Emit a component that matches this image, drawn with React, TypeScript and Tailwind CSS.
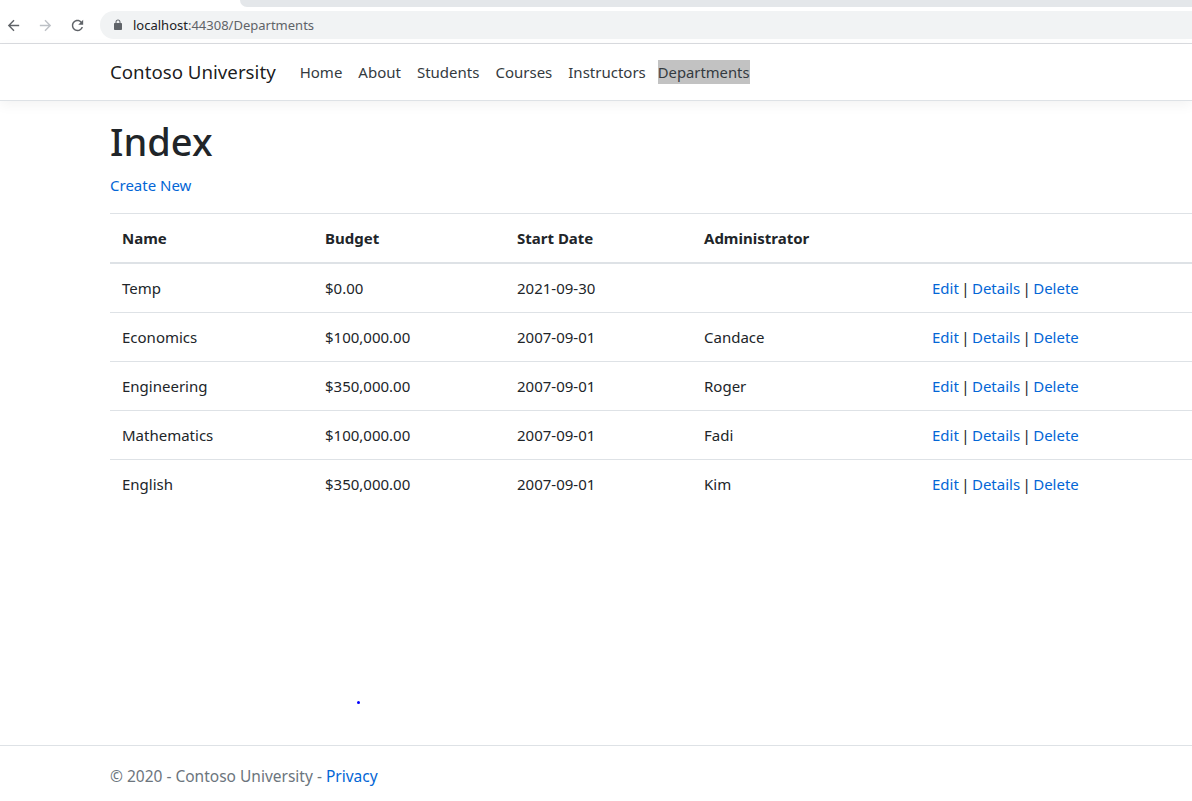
import React from "react";

const departments = [
  { name: "Temp", budget: "$0.00", start: "2021-09-30", admin: "" },
  { name: "Economics", budget: "$100,000.00", start: "2007-09-01", admin: "Candace" },
  { name: "Engineering", budget: "$350,000.00", start: "2007-09-01", admin: "Roger" },
  { name: "Mathematics", budget: "$100,000.00", start: "2007-09-01", admin: "Fadi" },
  { name: "English", budget: "$350,000.00", start: "2007-09-01", admin: "Kim" },
];

const navLinks = ["Home", "About", "Students", "Courses", "Instructors"];

function BrowserBar() {
  return (
    <div className="border-b border-[#dadce0] bg-white">
      <div className="flex h-[7px]">
        <div className="ml-[240px] flex-1 rounded-bl-[7px] bg-[#e4e7ea]" />
      </div>
      <div className="flex h-[36px] items-start pt-[4px]">
        <div className="flex h-[28px] w-[100px] items-center">
          <svg className="ml-[5px] h-[17px] w-[17px]" viewBox="0 0 24 24" fill="#5f6368">
            <path d="M20 11H7.83l5.59-5.59L12 4l-8 8 8 8 1.41-1.41L7.83 13H20v-2z" />
          </svg>
          <svg className="ml-[15px] h-[17px] w-[17px]" viewBox="0 0 24 24" fill="#bdc1c6">
            <path d="M12 4l-1.41 1.41L16.17 11H4v2h12.17l-5.58 5.59L12 20l8-8z" />
          </svg>
          <svg className="ml-[15px] h-[17px] w-[17px]" viewBox="0 0 24 24" fill="#5f6368">
            <path d="M17.65 6.35C16.2 4.9 14.21 4 12 4c-4.42 0-7.99 3.58-7.99 8s3.57 8 7.99 8c3.73 0 6.84-2.55 7.73-6h-2.08c-.82 2.33-3.04 4-5.65 4-3.31 0-6-2.69-6-6s2.69-6 6-6c1.66 0 3.14.69 4.22 1.78L13 11h7V4l-2.35 2.35z" />
          </svg>
        </div>
        <div className="flex h-[28px] flex-1 items-center rounded-l-full bg-[#f1f3f4] pl-[12px]">
          <svg className="h-[12px] w-[12px]" viewBox="0 0 24 24" fill="#5f6368">
            <path d="M18 8h-1V6c0-2.76-2.24-5-5-5S7 3.24 7 6v2H6c-1.1 0-2 .9-2 2v10c0 1.1.9 2 2 2h12c1.1 0 2-.9 2-2V10c0-1.1-.9-2-2-2zM9 6c0-1.66 1.34-3 3-3s3 1.34 3 3v2H9V6z" />
          </svg>
          <span className="ml-[9px] text-[13px] font-['Noto_Sans',sans-serif] text-[#202124]">
            localhost<span className="text-[#5f6368]">:44308/Departments</span>
          </span>
        </div>
      </div>
    </div>
  );
}

export default function App() {
  return (
    <div className="relative flex min-h-[801px] flex-col bg-white font-['Noto_Sans',sans-serif] text-[16px] leading-6 text-[#212529]">
      <BrowserBar />

      <header className="h-[57px] border-b border-[#dee2e6] bg-white shadow-[0_4px_12px_rgba(0,0,0,0.05)]">
        <div className="flex h-[56px] items-center pl-[110px]">
          <span className="mr-[16px] text-[18.7px] text-black/90">Contoso University</span>
          <nav className="flex items-center">
            {navLinks.map((l) => (
              <a key={l} className="px-[8px] text-[15px] text-[#343a40]">
                {l}
              </a>
            ))}
            <a className="ml-[4px] bg-[#c2c2c2] text-[14.8px] text-[#343a40]">Departments</a>
          </nav>
        </div>
      </header>

      <main className="flex-1 pl-[110px] pt-[16px]">
        <h1 className="mb-[8px] text-[38px] leading-[48px] font-medium">Index</h1>
        <p className="mb-[16px]">
          <a className="text-[15px] text-[#0366d6]">Create New</a>
        </p>
        <table className="w-[1110px] border-collapse text-left text-[15px]">
          <thead>
            <tr className="border-t border-b-2 border-[#dee2e6]">
              <th className="w-[203px] p-[12px] font-bold">Name</th>
              <th className="w-[192px] p-[12px] font-bold">Budget</th>
              <th className="w-[187px] p-[12px] font-bold">Start Date</th>
              <th className="w-[228px] p-[12px] font-bold">Administrator</th>
              <th className="p-[12px]"></th>
            </tr>
          </thead>
          <tbody>
            {departments.map((d, i) => (
              <tr key={d.name} className={i > 0 ? "border-t border-[#dee2e6]" : ""}>
                <td className="p-[12px]">{d.name}</td>
                <td className="p-[12px]">{d.budget}</td>
                <td className="p-[12px]">{d.start}</td>
                <td className="p-[12px]">{d.admin}</td>
                <td className="p-[12px] [word-spacing:-1.5px]">
                  <a className="text-[#0366d6]">Edit</a> |{" "}
                  <a className="text-[#0366d6]">Details</a> |{" "}
                  <a className="text-[#0366d6]">Delete</a>
                </td>
              </tr>
            ))}
          </tbody>
        </table>
      </main>

      <div className="absolute left-[357px] top-[701px] h-[3px] w-[3px] rounded-full bg-[#0000ff]" />

      <footer className="h-[56px] overflow-hidden border-t border-[#dee2e6] pl-[110px] text-[15.5px] leading-[60px] text-[#6c757d]">
        © 2020 - Contoso University - <a className="text-[#0366d6]">Privacy</a>
      </footer>
    </div>
  );
}
